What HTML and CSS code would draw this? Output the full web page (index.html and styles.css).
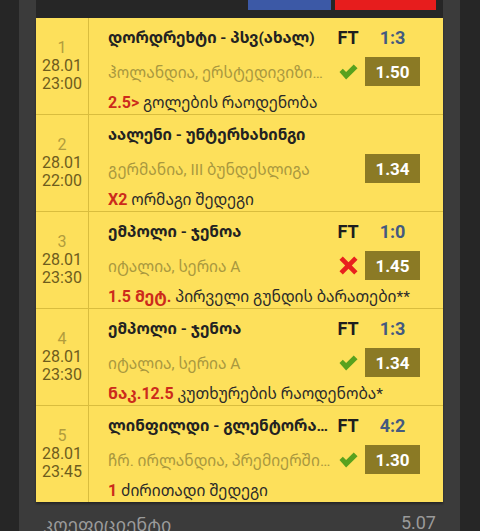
FILE: index.html
```html
<!DOCTYPE html>
<html>
<head>
<meta charset="utf-8">
<link rel="stylesheet" href="styles.css">
</head>
<body>
<div class="panel">
  <div class="topbar">
    <div class="btn btn-blue"></div>
    <div class="btn btn-red"></div>
  </div>
  <div class="card">
    <div class="row">
      <div class="when"><span class="num">1</span><span>28.01</span><span>23:00</span></div>
      <div class="info">
        <div class="title">დორდრეხტი - პსვ(ახალ)</div>
        <div class="ft">FT</div>
        <div class="score">1:3</div>
        <div class="league">ჰოლანდია, ერსტედივიზიონი</div>
        <div class="mark"><svg class="ok" viewBox="0 0 20 16"><path d="M0.5 8 L4 4.5 L7.5 8 L15.5 0 L19.5 4 L7.5 16 Z"/></svg></div>
        <div class="odds">1.50</div>
        <div class="market"><b>2.5&gt;</b> გოლების რაოდენობა</div>
      </div>
    </div>
    <div class="row">
      <div class="when"><span class="num">2</span><span>28.01</span><span>22:00</span></div>
      <div class="info">
        <div class="title">აალენი - უნტერხახინგი</div>
        <div class="ft"></div>
        <div class="score"></div>
        <div class="league">გერმანია, III ბუნდესლიგა</div>
        <div class="mark"></div>
        <div class="odds">1.34</div>
        <div class="market"><b>X2</b> ორმაგი შედეგი</div>
      </div>
    </div>
    <div class="row">
      <div class="when"><span class="num">3</span><span>28.01</span><span>23:30</span></div>
      <div class="info">
        <div class="title">ემპოლი - ჯენოა</div>
        <div class="ft">FT</div>
        <div class="score">1:0</div>
        <div class="league">იტალია, სერია A</div>
        <div class="mark"><svg class="no" viewBox="0 0 20 20"><path d="M0.5 4 L4 0.5 L10 6.5 L16 0.5 L19.5 4 L13.5 10 L19.5 16 L16 19.5 L10 13.5 L4 19.5 L0.5 16 L6.5 10 Z"/></svg></div>
        <div class="odds">1.45</div>
        <div class="market"><b>1.5 მეტ.</b> პირველი გუნდის ბარათები**</div>
      </div>
    </div>
    <div class="row">
      <div class="when"><span class="num">4</span><span>28.01</span><span>23:30</span></div>
      <div class="info">
        <div class="title">ემპოლი - ჯენოა</div>
        <div class="ft">FT</div>
        <div class="score">1:3</div>
        <div class="league">იტალია, სერია A</div>
        <div class="mark"><svg class="ok" viewBox="0 0 20 16"><path d="M0.5 8 L4 4.5 L7.5 8 L15.5 0 L19.5 4 L7.5 16 Z"/></svg></div>
        <div class="odds">1.34</div>
        <div class="market"><b>ნაკ.12.5</b> კუთხურების რაოდენობა*</div>
      </div>
    </div>
    <div class="row">
      <div class="when"><span class="num">5</span><span>28.01</span><span>23:45</span></div>
      <div class="info">
        <div class="title">ლინფილდი - გლენტორანი</div>
        <div class="ft">FT</div>
        <div class="score">4:2</div>
        <div class="league">ჩრ. ირლანდია, პრემიერშიპი</div>
        <div class="mark"><svg class="ok" viewBox="0 0 20 16"><path d="M0.5 8 L4 4.5 L7.5 8 L15.5 0 L19.5 4 L7.5 16 Z"/></svg></div>
        <div class="odds">1.30</div>
        <div class="market"><b>1</b> ძირითადი შედეგი</div>
      </div>
    </div>
  </div>
  <div class="footer">
    <span>კოეფიციენტი</span>
    <span>5.07</span>
  </div>
</div>
</body>
</html>
```
FILE: styles.css
```css
* { box-sizing: border-box; }
html, body { margin: 0; padding: 0; }
body {
  background: #262626;
  font-family: Roboto, "Noto Sans Georgian", "DejaVu Sans", sans-serif;
  height: 531px;
  overflow: hidden;
}
.panel {
  margin-left: 19px;
  width: 441px;
  min-height: 531px;
  background: #3b3b3b;
  padding: 0 17px;
}
.topbar {
  height: 18px;
  background: #262626;
  display: flex;
  justify-content: flex-end;
  align-items: flex-start;
  gap: 4px;
  padding-right: 7px;
}
.btn { height: 10px; }
.btn-blue { width: 83px; background: #3c59a6; }
.btn-red { width: 101px; background: #e71d1d; }
.card {
  background: #fde05b;
  box-shadow: 0 2px 2px rgba(0,0,0,0.35);
}
.row {
  display: grid;
  grid-template-columns: 53px 1fr;
  border-bottom: 1px solid #d9bd3e;
  height: 97px;
}
.row:last-child { border-bottom: none; height: 96px; }
.when {
  border-right: 1px solid #d9bd3e;
  display: flex;
  flex-direction: column;
  align-items: center;
  justify-content: center;
  font-size: 16px;
  line-height: 18px;
  color: #6d5c1d;
  padding-bottom: 1px;
}
.when .num { color: #b29c3d; }
.info {
  display: grid;
  grid-template-columns: 223px 28px 55px;
  grid-template-rows: 30px 39px 22px;
  column-gap: 3px;
  padding: 4px 21px 0 19px;
  align-items: center;
}
.title {
  font-weight: bold;
  font-size: 15.5px;
  color: #222;
  white-space: nowrap;
  overflow: hidden;
  text-overflow: ellipsis;
}
.ft {
  font-weight: bold;
  font-size: 18px;
  color: #1e1e1e;
  text-align: center;
}
.score {
  font-weight: bold;
  font-size: 18px;
  color: #445a80;
  text-align: center;
}
.league {
  font-size: 15.5px;
  color: #a9983f;
  white-space: nowrap;
  overflow: hidden;
  text-overflow: ellipsis;
}
.mark {
  display: flex;
  justify-content: center;
  align-items: center;
}
.mark svg.ok { width: 19px; height: 16px; fill: #58a11e; }
.mark svg.no { width: 19px; height: 19px; fill: #e8201e; }
.odds {
  height: 29px;
  background: #8b7a25;
  color: #fff;
  font-weight: bold;
  font-size: 17px;
  display: flex;
  align-items: center;
  justify-content: center;
}
.market {
  grid-column: 1 / 4;
  font-size: 15.5px;
  color: #2a2a2a;
  white-space: nowrap;
}
.market b { color: #cc2b1b; font-weight: bold; font-size: 16px; }
.footer {
  display: flex;
  justify-content: space-between;
  padding: 8px 7px 0 7px;
  font-size: 18px;
  color: #9a9a9a;
  margin-top: 2px;
}
```
